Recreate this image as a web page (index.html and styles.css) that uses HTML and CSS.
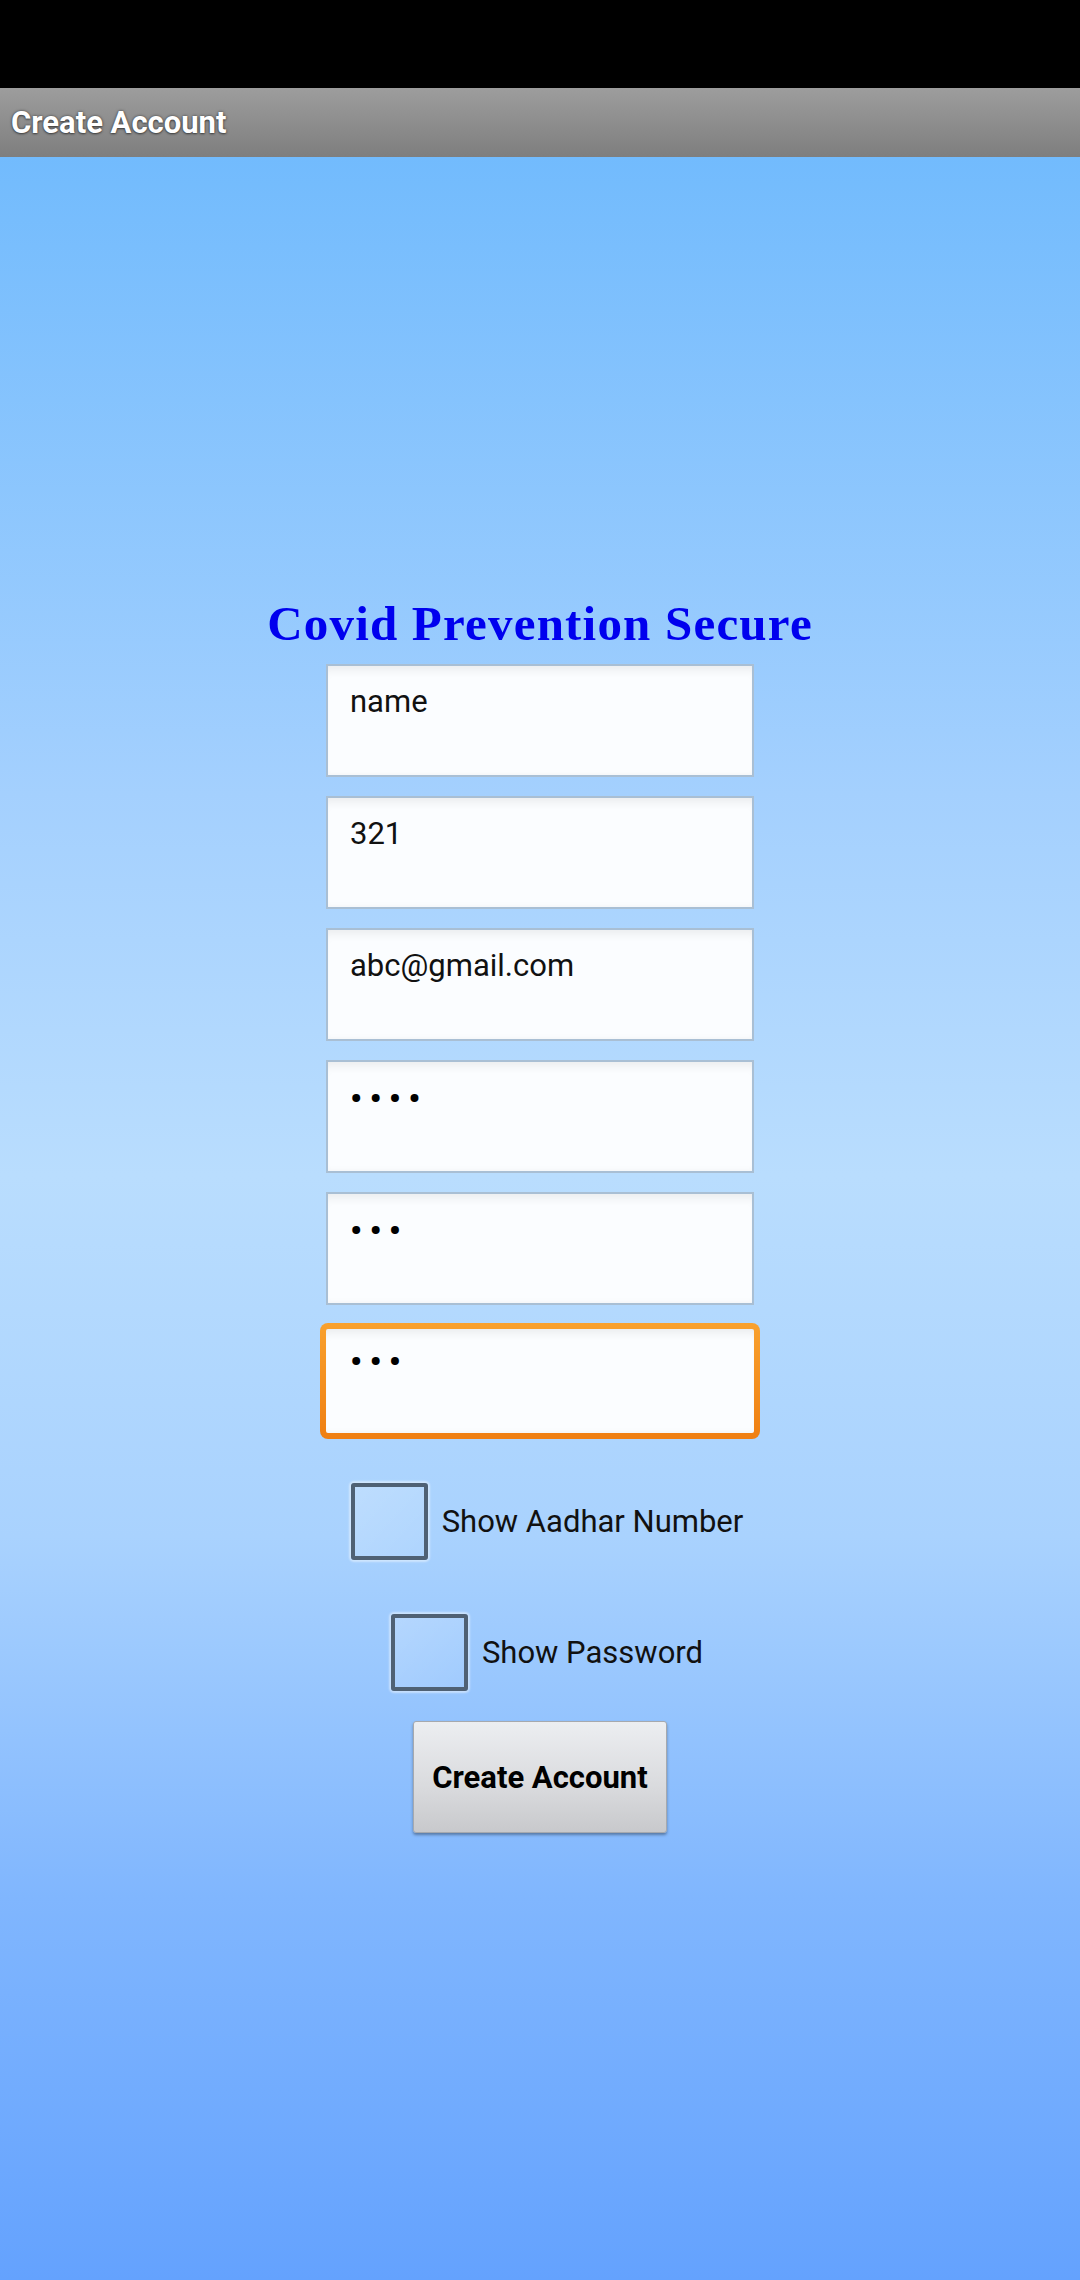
FILE: index.html
```
<!DOCTYPE html>
<html lang="en">
<head>
<meta charset="utf-8">
<title>Create Account</title>
<link rel="stylesheet" href="styles.css">
</head>
<body>
<div class="screen">
  <div class="status-bar"></div>
  <header class="app-bar"><span class="app-title">Create Account</span></header>
  <main class="content">
    <h1 class="heading">Covid Prevention Secure</h1>
    <div class="fields">
      <div class="field">name</div>
      <div class="field">321</div>
      <div class="field">abc@gmail.com</div>
      <div class="field"><span class="dots">••••</span></div>
      <div class="field"><span class="dots">•••</span></div>
      <div class="field field-focus"><span class="dots">•••</span></div>
    </div>
    <label class="check-row check-row-first">
      <span class="check-box"></span>
      <span class="check-label">Show Aadhar Number</span>
    </label>
    <label class="check-row check-row-second">
      <span class="check-box"></span>
      <span class="check-label">Show Password</span>
    </label>
    <button class="primary-btn" type="button">Create Account</button>
  </main>
</div>
</body>
</html>
```

FILE: styles.css
```
* {
  box-sizing: border-box;
}

html, body {
  margin: 0;
  padding: 0;
}

body {
  width: 1080px;
  height: 2280px;
  font-family: Roboto, "Noto Sans", "Liberation Sans", sans-serif;
  overflow: hidden;
}

.screen {
  display: flex;
  flex-direction: column;
  width: 1080px;
  height: 2280px;
}

.status-bar {
  height: 88px;
  background: #000;
  flex: none;
}

.app-bar {
  height: 69px;
  flex: none;
  display: flex;
  align-items: center;
  padding-left: 11px;
  background: linear-gradient(#9d9d9d, #7e7e7e);
}

.app-title {
  color: #fff;
  font-weight: 700;
  font-size: 31px;
  text-shadow: 0 0 3px rgba(0, 0, 0, 0.55), 0 1px 2px rgba(0, 0, 0, 0.4);
}

.content {
  flex: 1;
  display: flex;
  flex-direction: column;
  align-items: center;
  padding-top: 442px;
  background: linear-gradient(#72bbfd 0%, #a4d0fe 30%, #b9ddfe 48%, #a9d2fe 65%, #80b6fe 82%, #64a2fe 100%);
}

.heading {
  margin: 0;
  font-family: "Liberation Serif", "Times New Roman", serif;
  font-weight: 700;
  font-size: 49px;
  line-height: 49px;
  letter-spacing: 1.2px;
  color: #0000ee;
}

.fields {
  margin-top: 16px;
  display: flex;
  flex-direction: column;
  align-items: center;
  gap: 19px;
}

.field {
  width: 428px;
  height: 113px;
  border: 2px solid #a9bfd4;
  padding: 18px 22px;
  font-size: 31px;
  line-height: 36px;
  color: #111;
  background: #fbfdff;
  box-shadow: inset 0 10px 10px -6px rgba(0, 0, 0, 0.07), inset 0 -4px 6px -4px rgba(0, 0, 0, 0.05);
}

.field-focus {
  width: 440px;
  height: 116px;
  margin-top: -1px;
  border: 6px solid transparent;
  border-radius: 8px;
  padding: 14px 24px;
  background:
    linear-gradient(#fbfdff, #fbfdff) padding-box,
    linear-gradient(#f9a12e, #ef7f12) border-box;
}

.dots {
  font-size: 34px;
  font-weight: 700;
  letter-spacing: 7.2px;
  color: #000;
}

.check-row {
  display: flex;
  align-items: center;
  gap: 14px;
  padding-left: 14px;
}

.check-row-first {
  margin-top: 44px;
}

.check-row-second {
  margin-top: 54px;
}

.check-box {
  width: 77px;
  height: 77px;
  border: 4px solid #4f6174;
  border-radius: 3px;
  background: linear-gradient(135deg, rgba(255, 255, 255, 0.22), rgba(255, 255, 255, 0.08));
  box-shadow: 0 0 2px 2px rgba(255, 255, 255, 0.45);
}

.check-label {
  font-size: 31px;
  color: #111;
}

.primary-btn {
  margin-top: 30px;
  width: 254px;
  height: 112px;
  border: 1px solid #a6a9ae;
  border-radius: 3px;
  background: linear-gradient(#eceef1, #d9dadd 60%, #c8c9cc);
  box-shadow: 0 2px 3px rgba(0, 0, 0, 0.35);
  font-family: Roboto, "Noto Sans", "Liberation Sans", sans-serif;
  font-weight: 700;
  font-size: 31px;
  color: #000;
  padding: 0;
}
```
